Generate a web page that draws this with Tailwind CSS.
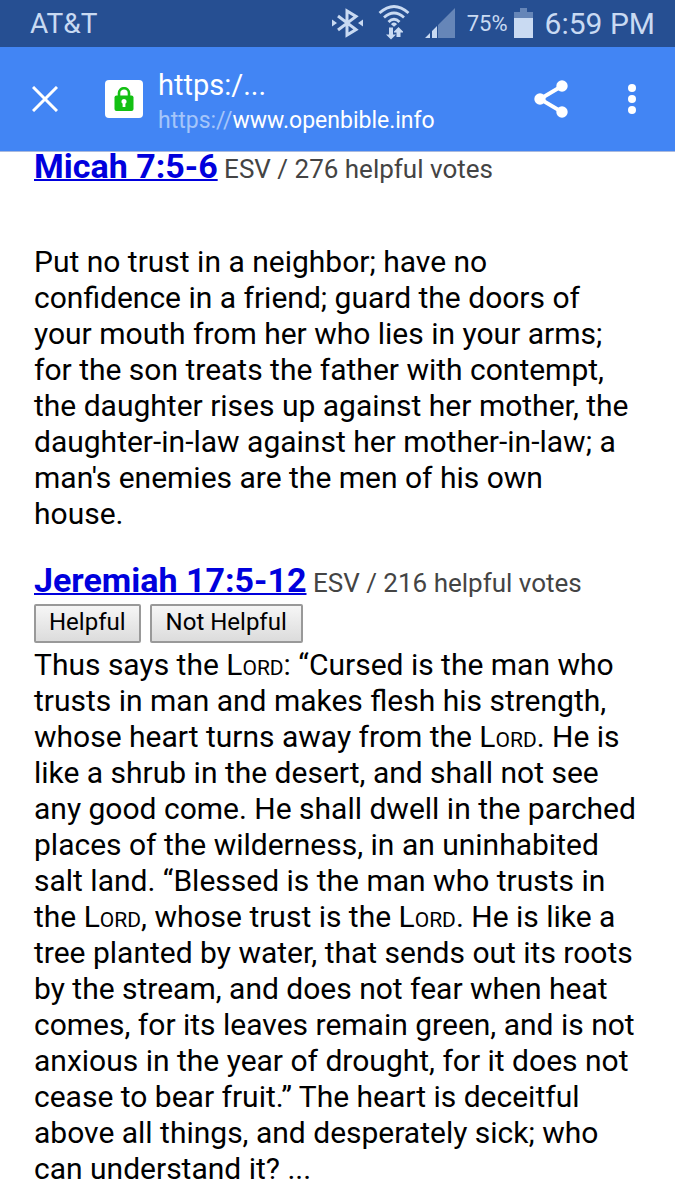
<!DOCTYPE html>
<html lang="en">
<head>
<meta charset="utf-8">
<meta name="viewport" content="width=device-width, initial-scale=1">
<title>openbible.info</title>
<script src="https://cdn.jsdelivr.net/npm/@tailwindcss/browser@4"></script>
</head>
<body class="min-h-screen bg-white font-['Roboto',sans-serif] text-black">
<div class="flex h-[47px] items-center bg-[#264f92] pr-5 pl-[30px] text-[#c9daf2]">
  <span class="text-[28px]">AT&amp;T</span>
  <div class="ml-auto flex items-center">
    <svg class="mb-[2px] h-[30px] w-8" viewBox="0 0 32 30" fill="none" stroke="currentColor" stroke-width="3" aria-hidden="true">
      <path d="M7 8L25 21.500L16 27V3L25 8.500L7 22"/>
      <path d="M1 11.500L6 15L1 18.500ZM32 11.500L27 15L32 18.500Z" fill="currentColor" stroke="none"/>
    </svg>
    <svg class="mb-1 ml-[15px] h-9 w-8" viewBox="0 0 32 36" fill="none" stroke="currentColor" stroke-width="2.800" aria-hidden="true">
      <path d="M1.500 9Q16-4 30.500 9M6 13.500Q16 4.500 26 13.500M10.500 18Q16 12.500 21.500 18"/>
      <path d="M16 18.500a3 3 0 0 1 3 1.700l-3 2.500l-3-2.500a3 3 0 0 1 3-1.700ZM11 23.500h4v7h3l-5 5l-5-5h3ZM18.500 33v-4.500h-2.500v-1l4.500-4.500l4.500 4.500v1h-2.500v4.500Z" fill="currentColor" stroke="none"/>
    </svg>
    <svg class="mb-[2px] ml-[15px] h-[30px] w-[30px]" viewBox="0 0 30 30" fill="currentColor" aria-hidden="true">
      <path d="M0 30L5 25V30ZM7 23L12 18V30H7Z"/>
      <path d="M13 17L30 0V30H13Z" opacity=".4"/>
    </svg>
    <span class="ml-3 text-[22px]">75%</span>
    <svg class="mb-[2px] ml-[6px] h-[30px] w-5" viewBox="0 0 20 30" fill="currentColor" aria-hidden="true">
      <path d="M6 0H13V4H19V10H0V4H6Z" opacity=".4"/>
      <path d="M0 10H19V30H0Z"/>
    </svg>
    <span class="ml-[11px] text-[30px]">6:59 PM</span>
  </div>
</div>
<header class="flex h-[105px] items-center border-b border-[#a9b9dd] bg-[#4285f4] pr-[31px] pl-8 text-white">
  <button type="button" aria-label="Close" class="h-[26px] w-[26px]">
    <svg class="h-full w-full" viewBox="0 0 26 26" stroke="currentColor" stroke-width="3" aria-hidden="true"><path d="M1 1L25 25M25 1L1 25"/></svg>
  </button>
  <button type="button" aria-label="Site security" class="ml-[47px] flex h-[38px] w-[38px] items-center justify-center rounded-sm bg-white">
    <svg class="h-6 w-5" viewBox="0 0 20 24" aria-hidden="true">
      <path d="M5 10V6a5 4.800 0 0 1 10 0v4" fill="none" stroke="#13c013" stroke-width="2.600"/>
      <rect x=".5" y="8.500" width="19" height="15.500" rx="2" fill="#13c013"/>
      <path d="M10 12a2.600 2.600 0 0 1 1.400 4.800v3.200h-2.800v-3.200a2.600 2.600 0 0 1 1.400-4.800Z" fill="#fff"/>
    </svg>
  </button>
  <div class="ml-[15px] flex flex-col gap-1 pt-2">
    <span class="text-[29px] leading-8">https:/...</span>
    <span class="text-[23px] leading-8"><span class="text-[#a5c5fa]">https://</span>www.openbible.info</span>
  </div>
  <button type="button" aria-label="Share" class="ml-auto h-[38px] w-[34px]">
    <svg class="h-full w-full" viewBox="0 0 34 38" fill="currentColor" aria-hidden="true">
      <path d="M28 6L6 19L28 32" fill="none" stroke="currentColor" stroke-width="3.800"/>
      <circle cx="28" cy="6" r="5.700"/><circle cx="6" cy="19" r="5.700"/><circle cx="28" cy="32" r="5.700"/>
    </svg>
  </button>
  <button type="button" aria-label="More options" class="ml-[52px] h-8 w-6">
    <svg class="h-full w-full" viewBox="0 0 24 32" fill="currentColor" aria-hidden="true"><circle cx="12" cy="5" r="4"/><circle cx="12" cy="16" r="4"/><circle cx="12" cy="27" r="4"/></svg>
  </button>
</header>
<main class="pr-[38px] pl-[34px] text-[30px] leading-9">
  <section>
    <h2 class="text-[26px] leading-7 text-[#444]"><a href="#" class="text-[34px] font-bold text-[#0000dd] underline decoration-2">Micah 7:5-6</a> ESV / 276 helpful votes</h2>
    <p class="pt-[61px]">Put no trust in a neighbor; have no confidence in a friend; guard the doors of your mouth from her who lies in your arms; for the son treats the father with contempt, the daughter rises up against her mother, the daughter-in-law against her mother-in-law; a man's enemies are the men of his own house.</p>
  </section>
  <section class="pt-[34px]">
    <h2 class="text-[26px] leading-7 text-[#444]"><a href="#" class="text-[34px] font-bold text-[#0000dd] underline decoration-2">Jeremiah 17:5-12</a> ESV / 216 helpful votes</h2>
    <div class="flex gap-[9px] pt-[7px] pb-1 text-[24px] leading-8">
      <button type="button" class="h-[39px] rounded-xs border-2 border-[#999] bg-linear-to-b from-[#f6f6f6] to-[#dcdcdc] px-[13px] pb-1">Helpful</button>
      <button type="button" class="h-[39px] rounded-xs border-2 border-[#999] bg-linear-to-b from-[#f6f6f6] to-[#dcdcdc] px-[14px] pb-1">Not Helpful</button>
    </div>
    <p>Thus says the L<span class="text-[21px] leading-none">ORD</span>: “Cursed is the man who trusts in man and makes flesh his strength, whose heart turns away from the L<span class="text-[21px] leading-none">ORD</span>. He is like a shrub in the desert, and shall not see any good come. He shall dwell in the parched places of the wilderness, in an uninhabited salt land. “Blessed is the man who trusts in the L<span class="text-[21px] leading-none">ORD</span>, whose trust is the L<span class="text-[21px] leading-none">ORD</span>. He is like a tree planted by water, that sends out its roots by the stream, and does not fear when heat comes, for its leaves remain green, and is not anxious in the year of drought, for it does not cease to bear fruit.” The heart is deceitful above all things, and desperately sick; who can understand it? ...</p>
  </section>
</main>
</body>
</html>
